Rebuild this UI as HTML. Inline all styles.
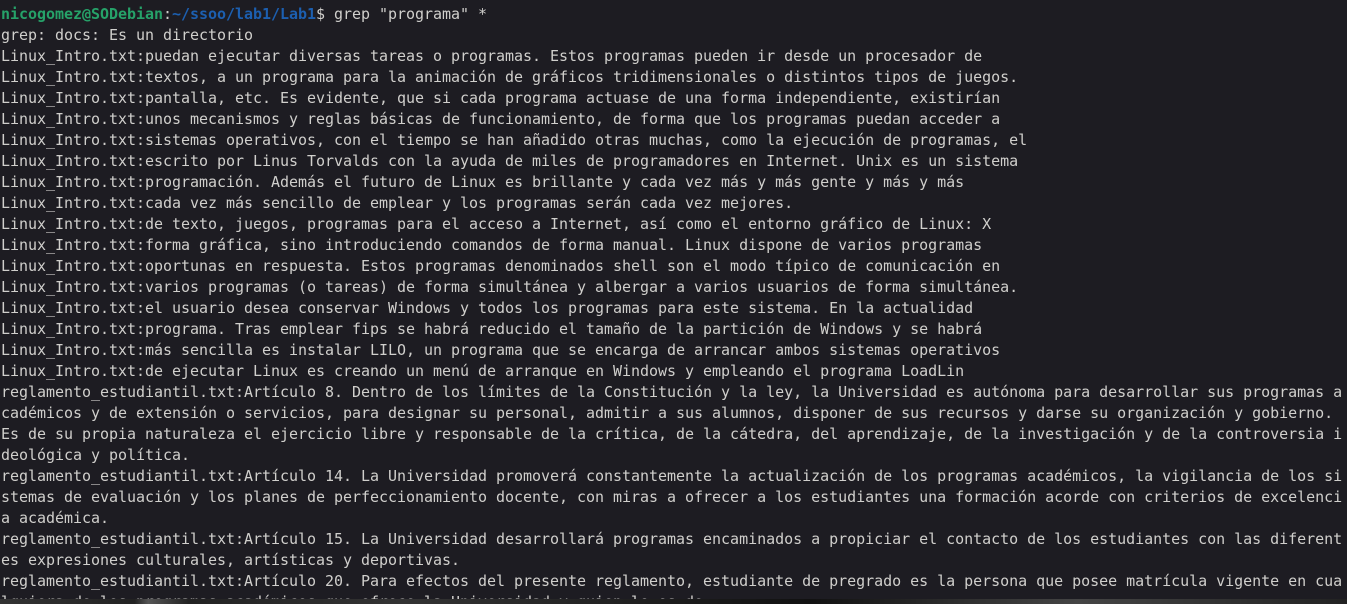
<!DOCTYPE html><html><head><meta charset="utf-8"><style>
html,body{margin:0;padding:0;background:#1d1c22;width:1347px;height:604px;overflow:hidden}
pre{margin:0;padding:4px 0 0 1px;font-family:"DejaVu Sans Mono","Liberation Mono",monospace;font-size:15px;line-height:21px;letter-spacing:-0.03px;color:#d0cfcc;white-space:pre}
.g{color:#26a269;font-weight:bold}.b{color:#1c5fb0;font-weight:bold}
.bar{position:absolute;left:0;top:599px;width:1347px;height:5px;background:linear-gradient(90deg,#333 0,#222 10%,#555 11%,#222 14%,#333 30%,#111 60%,#444 80%,#222 100%)}
</style></head><body><pre><span class="g">nicogomez@SODebian</span>:<span class="b">~/ssoo/lab1/Lab1</span>$ grep "programa" *
grep: docs: Es un directorio
Linux_Intro.txt:puedan ejecutar diversas tareas o programas. Estos programas pueden ir desde un procesador de
Linux_Intro.txt:textos, a un programa para la animación de gráficos tridimensionales o distintos tipos de juegos.
Linux_Intro.txt:pantalla, etc. Es evidente, que si cada programa actuase de una forma independiente, existirían
Linux_Intro.txt:unos mecanismos y reglas básicas de funcionamiento, de forma que los programas puedan acceder a
Linux_Intro.txt:sistemas operativos, con el tiempo se han añadido otras muchas, como la ejecución de programas, el
Linux_Intro.txt:escrito por Linus Torvalds con la ayuda de miles de programadores en Internet. Unix es un sistema
Linux_Intro.txt:programación. Además el futuro de Linux es brillante y cada vez más y más gente y más y más
Linux_Intro.txt:cada vez más sencillo de emplear y los programas serán cada vez mejores.
Linux_Intro.txt:de texto, juegos, programas para el acceso a Internet, así como el entorno gráfico de Linux: X
Linux_Intro.txt:forma gráfica, sino introduciendo comandos de forma manual. Linux dispone de varios programas
Linux_Intro.txt:oportunas en respuesta. Estos programas denominados shell son el modo típico de comunicación en
Linux_Intro.txt:varios programas (o tareas) de forma simultánea y albergar a varios usuarios de forma simultánea.
Linux_Intro.txt:el usuario desea conservar Windows y todos los programas para este sistema. En la actualidad
Linux_Intro.txt:programa. Tras emplear fips se habrá reducido el tamaño de la partición de Windows y se habrá
Linux_Intro.txt:más sencilla es instalar LILO, un programa que se encarga de arrancar ambos sistemas operativos
Linux_Intro.txt:de ejecutar Linux es creando un menú de arranque en Windows y empleando el programa LoadLin
reglamento_estudiantil.txt:Artículo 8. Dentro de los límites de la Constitución y la ley, la Universidad es autónoma para desarrollar sus programas a
cadémicos y de extensión o servicios, para designar su personal, admitir a sus alumnos, disponer de sus recursos y darse su organización y gobierno.
Es de su propia naturaleza el ejercicio libre y responsable de la crítica, de la cátedra, del aprendizaje, de la investigación y de la controversia i
deológica y política.
reglamento_estudiantil.txt:Artículo 14. La Universidad promoverá constantemente la actualización de los programas académicos, la vigilancia de los si
stemas de evaluación y los planes de perfeccionamiento docente, con miras a ofrecer a los estudiantes una formación acorde con criterios de excelenci
a académica.
reglamento_estudiantil.txt:Artículo 15. La Universidad desarrollará programas encaminados a propiciar el contacto de los estudiantes con las diferent
es expresiones culturales, artísticas y deportivas.
reglamento_estudiantil.txt:Artículo 20. Para efectos del presente reglamento, estudiante de pregrado es la persona que posee matrícula vigente en cua
lquiera de los programas académicos que ofrece la Universidad y quien lo es de</pre><div class="bar"></div></body></html>
